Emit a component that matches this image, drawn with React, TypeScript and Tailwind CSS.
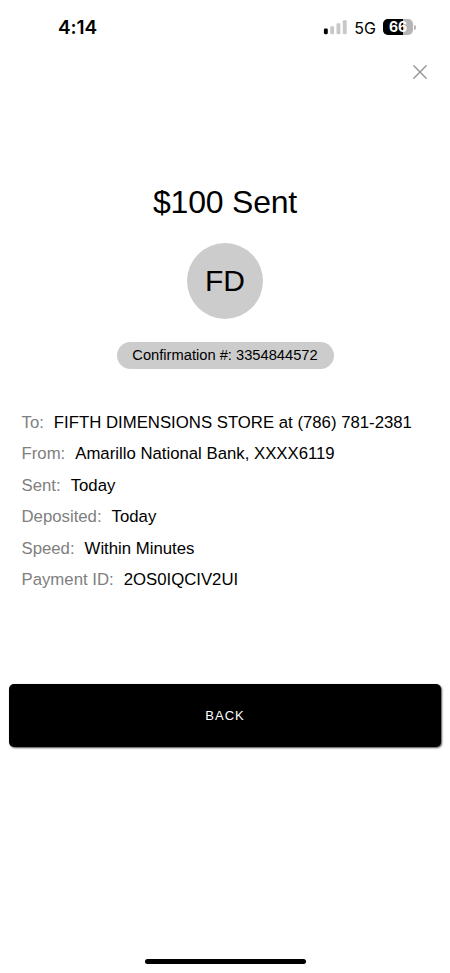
const details = [
  { label: "To:", value: "FIFTH DIMENSIONS STORE at (786) 781-2381" },
  { label: "From:", value: "Amarillo National Bank, XXXX6119" },
  { label: "Sent:", value: "Today" },
  { label: "Deposited:", value: "Today" },
  { label: "Speed:", value: "Within Minutes" },
  { label: "Payment ID:", value: "2OS0IQCIV2UI" }
];

function SignalBars() {
  return (
    <svg width="24" height="15" viewBox="0 0 24 15">
      <rect x="0.9" y="8.6" width="3.9" height="5.6" rx="1.1" fill="#000" />
      <rect x="7.2" y="6.2" width="3.9" height="8" rx="1.1" fill="#c8c8c8" />
      <rect x="13.5" y="3.3" width="3.9" height="10.9" rx="1.1" fill="#c8c8c8" />
      <rect x="19.8" y="0.2" width="3.9" height="14" rx="1.1" fill="#c8c8c8" />
    </svg>
  );
}

function Battery({ level }: { level: number }) {
  return (
    <div className="flex items-center gap-px">
      <div className="relative flex h-4 w-[30px] items-center justify-center overflow-hidden rounded-[5px] bg-[#b5b5b5]">
        <span className="absolute inset-y-0 left-0 bg-black" style={{ width: `${level}%` }} />
        <span className="relative font-['Inter',sans-serif] text-[14px] font-bold leading-4 text-white">{level}</span>
      </div>
      <span className="h-[5px] w-[2px] rounded-r-full bg-[#b5b5b5]" />
    </div>
  );
}

function StatusBar() {
  return (
    <header className="flex h-[54px] items-center justify-between pl-[58px] pr-[34px]">
      <span className="pt-[2px] font-['Inter',sans-serif] text-[19px] font-semibold leading-6 tracking-[-0.1px]">4:14</span>
      <div className="flex items-center">
        <SignalBars />
        <span className="ml-[7px] mr-[7px] pt-px font-['Inter',sans-serif] text-[16px] leading-5">5G</span>
        <Battery level={66} />
      </div>
    </header>
  );
}

export default function App() {
  return (
    <main className="flex h-[973px] w-[450px] flex-col overflow-hidden bg-white font-['Liberation_Sans',Arial,sans-serif] text-black">
      <StatusBar />

      <div className="flex justify-end pr-[22px] pt-[10px]">
        <button aria-label="Close" className="text-[#999999]">
          <svg width="16" height="16" viewBox="0 0 16 16" fill="none" stroke="currentColor" strokeWidth="1.5" strokeLinecap="round">
            <path d="M1.8 1.8 14.2 14.2M14.2 1.8 1.8 14.2" />
          </svg>
        </button>
      </div>

      <section className="mt-[102px] flex flex-col items-center">
        <h1 className="text-[32px] leading-10 tracking-[-0.2px]">$100 Sent</h1>
        <div className="mt-[21px] flex size-[76px] items-center justify-center rounded-full bg-[#cccccc] pb-[2px] text-[30px]">FD</div>
        <p className="mt-[23px] flex h-[27px] w-[217px] items-center justify-center rounded-full bg-[#cccccc] text-[14.7px]">
          Confirmation #: 3354844572
        </p>
      </section>

      <dl className="mt-[37.5px] pl-[21.5px] text-[16.75px]">
        {details.map((item) => (
          <div key={item.label} className="flex h-[31.5px] items-center gap-[10px] whitespace-nowrap">
            <dt className="text-[#808080]">{item.label}</dt>
            <dd>{item.value}</dd>
          </div>
        ))}
      </dl>

      <button className="mx-[9px] mt-[88.5px] h-[63px] rounded-[5px] bg-black text-[13px] tracking-[1px] text-white shadow-[1px_1px_2px_rgba(0,0,0,0.7)]">
        BACK
      </button>

      <div className="mb-[9px] ml-[145px] mt-auto h-[5px] w-[161px] rounded-full bg-black" />
    </main>
  );
}
